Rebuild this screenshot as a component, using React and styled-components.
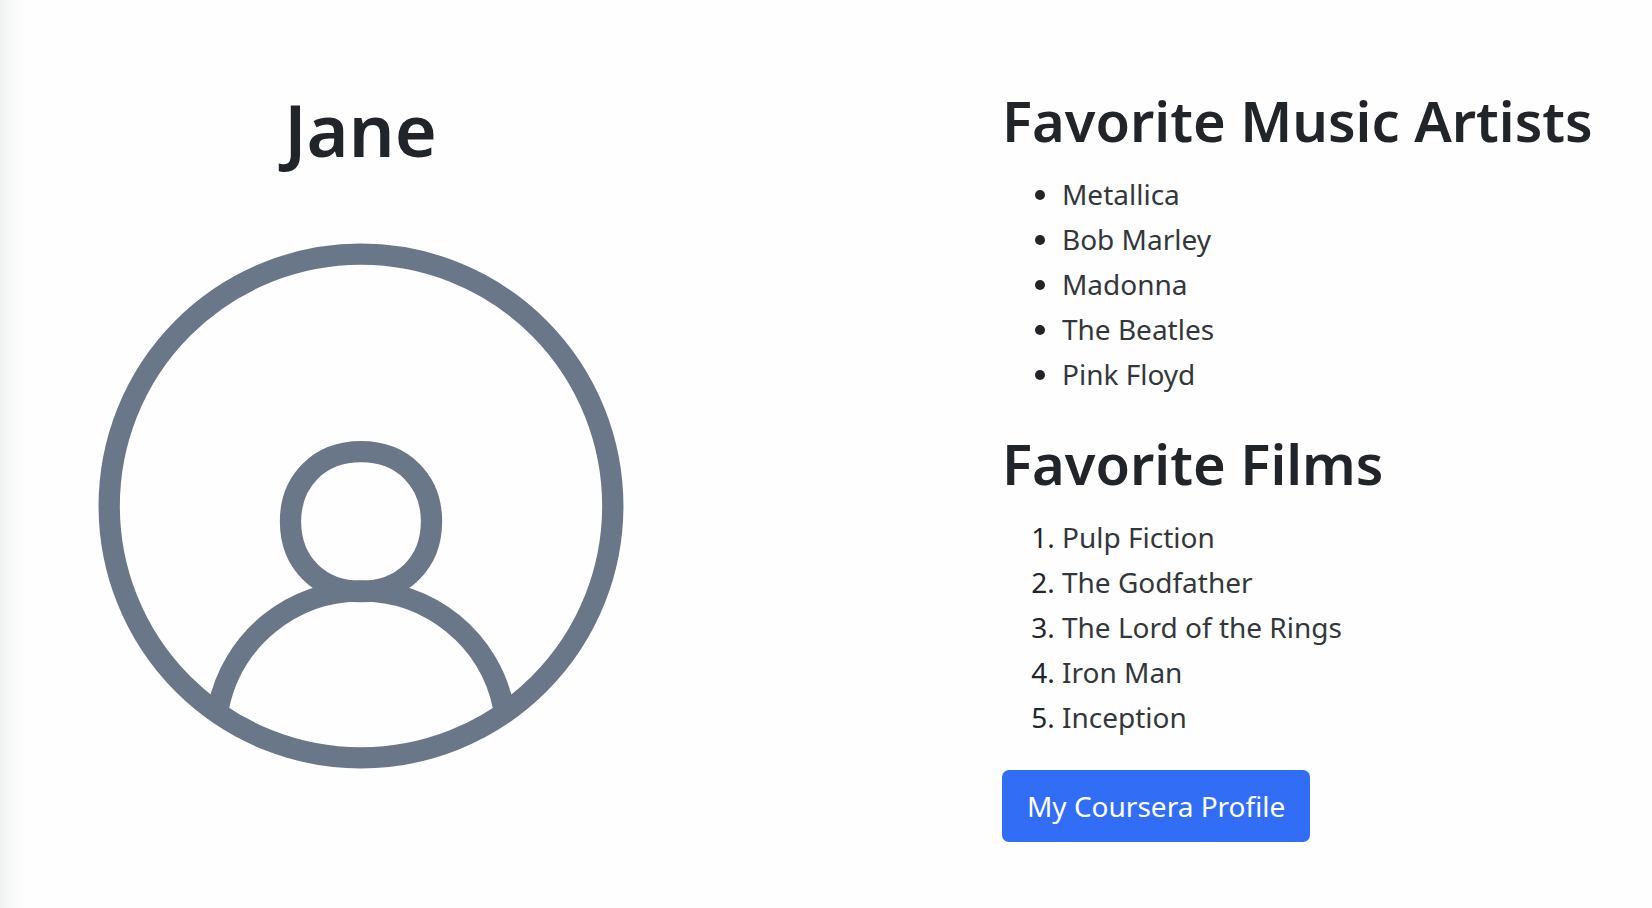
import React from "react";
import styled, { createGlobalStyle } from "styled-components";

const GlobalStyle = createGlobalStyle`
  *, *::before, *::after { box-sizing: border-box; }
  body {
    margin: 0;
    background: #fefefe;
    color: #212529;
    font-family: "Noto Sans", "Open Sans", sans-serif;
    font-size: 28px;
    line-height: 45px;
  }
`;

const Page = styled.div`
  display: grid;
  grid-template-columns: minmax(0, 720fr) minmax(0, 649fr);
  column-gap: 17%;
  align-items: start;
  min-height: 100vh;
  padding: 84px 0 68px;
  background: linear-gradient(to right, #eef1f0, #f7f9f8 10px, #fcfdfd 20px, #fefefe 30px);
`;

const Profile = styled.header`
  display: flex;
  flex-direction: column;
  align-items: center;
  gap: 69px;
`;

const Name = styled.h1`
  margin: 0;
  font-size: 72px;
  font-weight: 600;
  line-height: 90px;
`;

const Avatar = styled.svg`
  display: block;
  width: 526px;
  max-width: 100%;
  height: auto;
  fill: none;
  stroke: #6a7788;
  stroke-width: 21.3;
`;

const Favorites = styled.main`
  display: flex;
  flex-direction: column;
  align-items: flex-start;
`;

const Heading = styled.h2`
  margin: 0 0 16px;
  font-size: 56px;
  font-weight: 600;
  line-height: 72px;
  white-space: nowrap;
`;

const List = styled.ul`
  margin: 0 0 30px;
  padding-left: 60px;
`;

const Item = styled.li`
  color: #33373b;

  &::marker { color: #212529; }
`;

const ProfileLink = styled.a`
  padding: 14px 25px 13px;
  border-radius: 7px;
  background: #316df5;
  color: #fff;
  text-decoration: none;
  white-space: nowrap;
`;

const artists = ["Metallica", "Bob Marley", "Madonna", "The Beatles", "Pink Floyd"];
const films = ["Pulp Fiction", "The Godfather", "The Lord of the Rings", "Iron Man", "Inception"];

function Section({ title, items, ordered }) {
  return (
    <section>
      <Heading>{title}</Heading>
      <List as={ordered ? "ol" : "ul"}>
        {items.map((item) => (
          <Item key={item}>{item}</Item>
        ))}
      </List>
    </section>
  );
}

export default function App() {
  return (
    <>
      <GlobalStyle />
      <Page>
        <Profile>
          <Name>Jane</Name>
          <Avatar viewBox="0 0 526 526" role="img" aria-label="Profile picture">
            <circle cx="263" cy="263" r="251.8" />
            <path d="M263 208.7C304 208.7 333.5 237 333.5 278.5C333.5 320 304 348.5 263 348.5C222 348.5 192.5 320 192.5 278.5C192.5 237 222 208.7 263 208.7Z" />
            <path d="M120.5 464A145.5 145.5 0 0 1 405.500 464" />
          </Avatar>
        </Profile>
        <Favorites>
          <Section title="Favorite Music Artists" items={artists} />
          <Section title="Favorite Films" items={films} ordered />
          <ProfileLink href="#profile">My Coursera Profile</ProfileLink>
        </Favorites>
      </Page>
    </>
  );
}
